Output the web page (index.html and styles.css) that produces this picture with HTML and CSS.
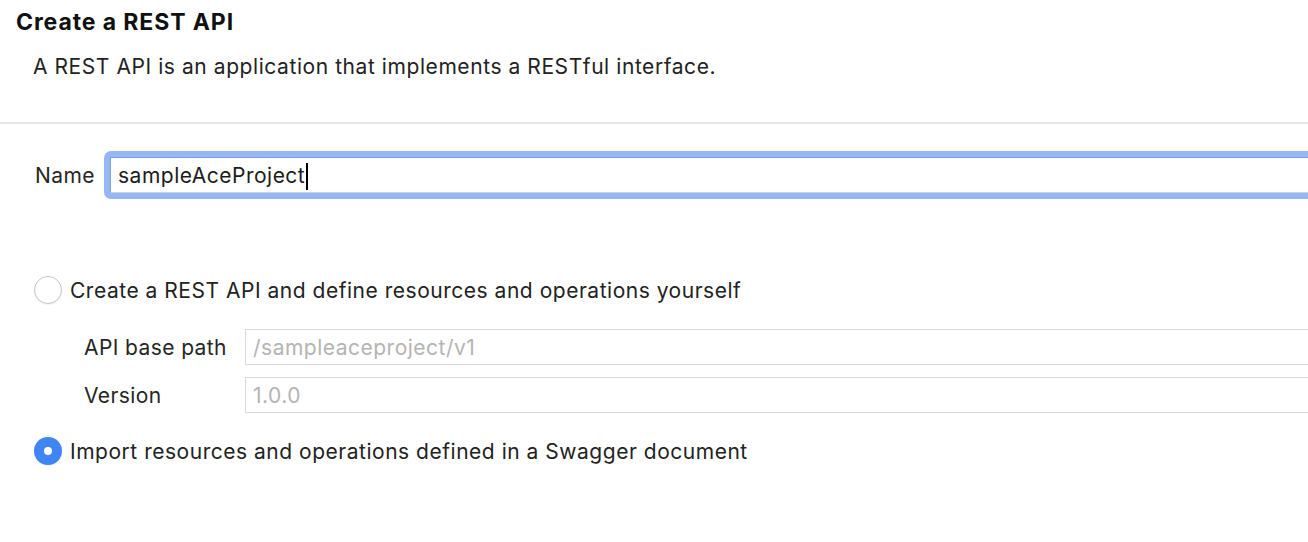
FILE: index.html
```html
<!DOCTYPE html>
<html>
<head>
<meta charset="utf-8">
<link rel="stylesheet" href="styles.css">
</head>
<body>
<div class="page">
  <header class="header">
    <h1 class="title">Create a REST API</h1>
    <p class="subtitle">A REST API is an application that implements a RESTful interface.</p>
  </header>
  <div class="separator"></div>
  <form class="form">
    <div class="name-row">
      <label class="name-label">Name</label>
      <div class="focus-ring">
        <div class="input input-focused"><span class="value">sampleAceProject</span><span class="caret"></span></div>
      </div>
    </div>
    <div class="radio-row radio-row-first">
      <span class="radio"></span>
      <span class="radio-text">Create a REST API and define resources and operations yourself</span>
    </div>
    <div class="sub-fields">
      <div class="sub-row">
        <label class="sub-label">API base path</label>
        <div class="input input-disabled">/sampleaceproject/v1</div>
      </div>
      <div class="sub-row sub-row-second">
        <label class="sub-label">Version</label>
        <div class="input input-disabled">1.0.0</div>
      </div>
    </div>
    <div class="radio-row radio-row-second">
      <span class="radio radio-checked"></span>
      <span class="radio-text">Import resources and operations defined in a Swagger document</span>
    </div>
  </form>
</div>
</body>
</html>
```

FILE: styles.css
```css
html, body {
  margin: 0;
  padding: 0;
  background: #ffffff;
}

body {
  width: 1308px;
  height: 542px;
  overflow: hidden;
  font-family: "Inter", "Liberation Sans", sans-serif;
  color: #262626;
}

.page {
  display: flex;
  flex-direction: column;
}

.header {
  padding: 8px 16px 0 16px;
}

.title {
  margin: 0;
  font-size: 23px;
  line-height: 28px;
  font-weight: 700;
  letter-spacing: 0.9px;
  color: #111111;
}

.subtitle {
  margin: 19px 0 0 17px;
  font-size: 21px;
  line-height: 24px;
  letter-spacing: 0.57px;
  color: #222222;
}

.separator {
  margin-top: 43px;
  height: 2px;
  background: #e6e6e6;
}

.form {
  display: flex;
  flex-direction: column;
  padding-left: 34px;
  margin: 0;
}

.name-row {
  display: flex;
  align-items: center;
  margin-top: 27px;
  margin-right: -20px;
}

.name-label {
  width: 70px;
  font-size: 21px;
  line-height: 24px;
  letter-spacing: 0.4px;
  padding-left: 1px;
  padding-top: 2px;
  box-sizing: border-box;
}

.focus-ring {
  flex: 1;
  background: #95b7f3;
  padding: 6px;
  border-radius: 7px;
}

.input {
  box-sizing: border-box;
  height: 36px;
  display: flex;
  align-items: center;
  padding: 0 7px;
  font-size: 21px;
  line-height: 24px;
  letter-spacing: 0.5px;
  background: #ffffff;
}

.input-focused {
  border: 1px solid #7d9fe3;
  border-bottom-color: #c9d3e6;
  color: #1c1c1c;
  padding-top: 2px;
}

.caret {
  display: inline-block;
  width: 2px;
  height: 27px;
  background: #000000;
  margin-left: 1px;
}

.radio-row {
  display: flex;
  align-items: center;
  height: 28px;
}

.radio-row-first {
  margin-top: 77px;
}

.radio-row-second {
  margin-top: 24px;
}

.radio {
  box-sizing: border-box;
  width: 28px;
  height: 28px;
  border-radius: 50%;
  border: 1px solid #c6c6c6;
  background: #ffffff;
  box-shadow: 0 1px 1px rgba(0, 0, 0, 0.06);
  margin-right: 8px;
  display: flex;
  align-items: center;
  justify-content: center;
}

.radio-checked {
  border: none;
  background: #3f86f4;
}

.radio-checked::after {
  content: "";
  width: 8px;
  height: 8px;
  border-radius: 50%;
  background: #ffffff;
}

.radio-text {
  font-size: 21px;
  line-height: 24px;
  letter-spacing: 0.52px;
  color: #222222;
  padding-top: 2px;
}

.sub-fields {
  display: flex;
  flex-direction: column;
  margin-top: 25px;
  margin-right: -20px;
}

.sub-row {
  display: flex;
  align-items: center;
}

.sub-row-second {
  margin-top: 12px;
}

.sub-label {
  width: 211px;
  padding-left: 50px;
  box-sizing: border-box;
  font-size: 21px;
  line-height: 24px;
  letter-spacing: 0.4px;
  padding-top: 2px;
}

.input-disabled {
  flex: 1;
  border: 1px solid #dadada;
  color: #b4b4b4;
  padding-top: 2px;
}
```
